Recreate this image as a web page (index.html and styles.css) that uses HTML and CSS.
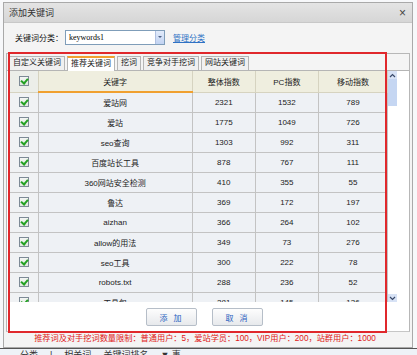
FILE: index.html
```html
<!DOCTYPE html>
<html lang="zh-CN">
<head>
    <meta charset="UTF-8">
    <title>添加关键词</title>
    <link rel="stylesheet" href="styles.css">
</head>
<body>
    <div class="dialog">
        <div class="titlebar">
            <span class="title">添加关键词</span>
            <span class="close">×</span>
        </div>

        <div class="dialog-body">
            <div class="category">
                <label>关键词分类：</label>
                <div class="select">
                    <span class="select-value">keywords1</span>
                    <span class="select-arrow"></span>
                </div>
                <a class="manage" href="#">管理分类</a>
            </div>

            <div class="panel">
                <div class="tabs">
                    <span class="tab">自定义关键词</span>
                    <span class="tab active">推荐关键词</span>
                    <span class="tab">挖词</span>
                    <span class="tab">竞争对手挖词</span>
                    <span class="tab">网站关键词</span>
                </div>

                <div class="tab-body">
                    <div class="grid">
                        <div class="grid-view">
                            <table>
                                <thead>
                                    <tr>
                                        <th class="col-check"><span class="cb"></span></th>
                                        <th class="col-word sorted">关键字</th>
                                        <th class="col-num">整体指数</th>
                                        <th class="col-num">PC指数</th>
                                        <th class="col-last">移动指数</th>
                                    </tr>
                                </thead>
                                <tbody>
                                    <tr><td class="col-check"><span class="cb"></span></td><td>爱站网</td><td>2321</td><td>1532</td><td>789</td></tr>
                                    <tr><td class="col-check"><span class="cb"></span></td><td>爱站</td><td>1775</td><td>1049</td><td>726</td></tr>
                                    <tr><td class="col-check"><span class="cb"></span></td><td>seo查询</td><td>1303</td><td>992</td><td>311</td></tr>
                                    <tr><td class="col-check"><span class="cb"></span></td><td>百度站长工具</td><td>878</td><td>767</td><td>111</td></tr>
                                    <tr><td class="col-check"><span class="cb"></span></td><td>360网站安全检测</td><td>410</td><td>355</td><td>55</td></tr>
                                    <tr><td class="col-check"><span class="cb"></span></td><td>鲁达</td><td>369</td><td>172</td><td>197</td></tr>
                                    <tr><td class="col-check"><span class="cb"></span></td><td>aizhan</td><td>366</td><td>264</td><td>102</td></tr>
                                    <tr><td class="col-check"><span class="cb"></span></td><td>allow的用法</td><td>349</td><td>73</td><td>276</td></tr>
                                    <tr><td class="col-check"><span class="cb"></span></td><td>seo工具</td><td>300</td><td>222</td><td>78</td></tr>
                                    <tr><td class="col-check"><span class="cb"></span></td><td>robots.txt</td><td>288</td><td>236</td><td>52</td></tr>
                                    <tr><td class="col-check"><span class="cb"></span></td><td>工具包</td><td>281</td><td>145</td><td>136</td></tr>
                                </tbody>
                            </table>
                        </div>
                        <div class="scrollbar">
                            <span class="scroll-btn up">
                                <svg width="7" height="5" viewBox="0 0 7 5"><path d="M1 4 L3.5 1.5 L6 4" fill="none" stroke="#3a4a6a" stroke-width="1.2"/></svg>
                            </span>
                            <span class="scroll-thumb"></span>
                            <span class="scroll-track"></span>
                            <span class="scroll-btn down">
                                <svg width="7" height="5" viewBox="0 0 7 5"><path d="M1 1 L3.5 3.5 L6 1" fill="none" stroke="#3a4a6a" stroke-width="1.2"/></svg>
                            </span>
                        </div>
                    </div>

                    <div class="buttons">
                        <button type="button">添 加</button>
                        <button type="button">取 消</button>
                    </div>
                </div>
            </div>

            <div class="limit-note">推荐词及对手挖词数量限制：普通用户：5，爱站学员：100，VIP用户：200，站群用户：1000</div>

            <div class="highlight"></div>
        </div>
    </div>

    <div class="page-strip">
        <span>分类</span><span>|</span><span>相关词</span><span>关键词排名</span><span>▼ 事</span>
    </div>
</body>
</html>
```

FILE: styles.css
```css
* {
    box-sizing: border-box;
    margin: 0;
    padding: 0;
}

body {
    font-family: "Liberation Sans", "Noto Sans CJK SC", sans-serif;
    font-size: 8px;
    color: #222;
    background-color: #f7f8fa;
    width: 417px;
    height: 355px;
    overflow: hidden;
}

.dialog {
    width: 410px;
    margin: 2px 0 0 3px;
    border: 1px solid #a9a9a9;
    background: #f4f4f4;
}

.titlebar {
    display: flex;
    justify-content: space-between;
    align-items: center;
    height: 20px;
    padding: 0 6px 0 5px;
    background: linear-gradient(#e4e4e4, #d6d6d6);
    border-bottom: 1px solid #c8c8c8;
}

.title {
    font-size: 9px;
    color: #333;
}

.close {
    font-size: 12px;
    color: #444;
}

.dialog-body {
    position: relative;
    padding: 7px 0 0 0;
}

.category {
    display: flex;
    align-items: center;
    height: 15px;
    padding-left: 11px;
}

.category label {
    width: 50px;
    color: #111;
}

.select {
    display: flex;
    justify-content: space-between;
    width: 100px;
    height: 15px;
    border: 1px solid #7f9db9;
    background: #fff;
}

.select-value {
    font-family: "Liberation Serif", serif;
    font-size: 8px;
    line-height: 13px;
    padding-left: 3px;
    color: #000;
}

.select-arrow {
    width: 9px;
    background: linear-gradient(#e2ebfa, #c2d3f2);
    border-left: 1px solid #b0c0e0;
    position: relative;
}

.select-arrow::after {
    content: "";
    position: absolute;
    left: 2px;
    top: 5px;
    border-left: 2px solid transparent;
    border-right: 2px solid transparent;
    border-top: 2px solid #4d6185;
}

.manage {
    margin-left: 8px;
    color: #2f72c4;
    text-decoration: underline;
}

.panel {
    margin: 8px 0 0 2px;
    width: 404px;
    border: 1px solid #b7b7b7;
    border-bottom-color: #c6c6c6;
}

.tabs {
    display: flex;
    gap: 2px;
    padding: 2px 0 0 2px;
    height: 16px;
}

.tab {
    height: 14px;
    line-height: 12px;
    padding: 0 3px;
    border: 1px solid #b5b5b5;
    border-bottom: none;
    background: #f0f0f0;
    color: #222;
}

.tab.active {
    background: #fff;
    border-top: 2px solid #f0a030;
    line-height: 11px;
    height: 15px;
}

.tab-body {
    background: #fff;
    border-top: 1px solid #b5b5b5;
    padding-bottom: 5px;
}

.grid {
    display: flex;
    margin-left: 3px;
    width: 387px;
    height: 231px;
}

.grid-view {
    width: 378px;
    overflow: hidden;
}

table {
    width: 378px;
    table-layout: fixed;
    border-collapse: collapse;
}

th {
    height: 21px;
    font-weight: normal;
    background: #efeedf;
    border-right: 1px solid #d6d3c0;
    border-bottom: 1px solid #d6d3c0;
    color: #222;
}

th.sorted {
    border-bottom: 2px solid #f0a030;
}

td {
    height: 20px;
    text-align: center;
    background: #eef1f5;
    border-right: 1px solid #c3c3c3;
    border-bottom: 1px solid #c3c3c3;
    color: #222;
}

.col-check {
    width: 28px;
    background: #eceee9;
}

td.col-check {
    background: #f0f2f4;
}

.col-word {
    width: 154px;
}

.col-num {
    width: 63px;
}

.col-last {
    width: 69px;
}

.cb {
    display: inline-block;
    position: relative;
    width: 10px;
    height: 10px;
    vertical-align: middle;
    border: 1px solid #7d8a96;
    background: linear-gradient(#f4f6f4, #dfe6df);
}

.cb::after {
    content: "";
    position: absolute;
    left: 2px;
    top: 0;
    width: 3px;
    height: 5px;
    border-right: 2px solid #22a022;
    border-bottom: 2px solid #22a022;
    transform: rotate(40deg);
}

.scrollbar {
    display: flex;
    flex-direction: column;
    width: 9px;
    background: #fff;
}

.scroll-btn {
    display: flex;
    justify-content: center;
    align-items: center;
    height: 8px;
    background: #d7e2f5;
}

.scroll-thumb {
    height: 27px;
    background: #c5d6f2;
}

.scroll-track {
    flex: 1;
}

.buttons {
    display: flex;
    justify-content: center;
    gap: 15px;
    margin: 6px 0 0 0;
    width: 395px;
}

button {
    width: 51px;
    height: 18px;
    font-family: "Liberation Sans", "Noto Sans CJK SC", sans-serif;
    font-size: 8px;
    letter-spacing: 2px;
    color: #2a62bf;
    border: 1px solid #b6bec8;
    border-radius: 2px;
    background: linear-gradient(#fdfdfd, #e7e9ec);
}

.limit-note {
    height: 15px;
    line-height: 14px;
    text-align: center;
    font-size: 8.2px;
    color: #e01818;
    padding-right: 6px;
}

.highlight {
    position: absolute;
    left: 4px;
    top: 29px;
    width: 379px;
    height: 281px;
    border: 2px solid #e0282c;
    pointer-events: none;
}

.page-strip {
    display: flex;
    gap: 12px;
    height: 7px;
    margin-top: 0;
    padding-left: 20px;
    border-top: 1px solid #555;
    background: #eef2f7;
    font-size: 9px;
    line-height: 12px;
    color: #333;
    overflow: hidden;
}
```
